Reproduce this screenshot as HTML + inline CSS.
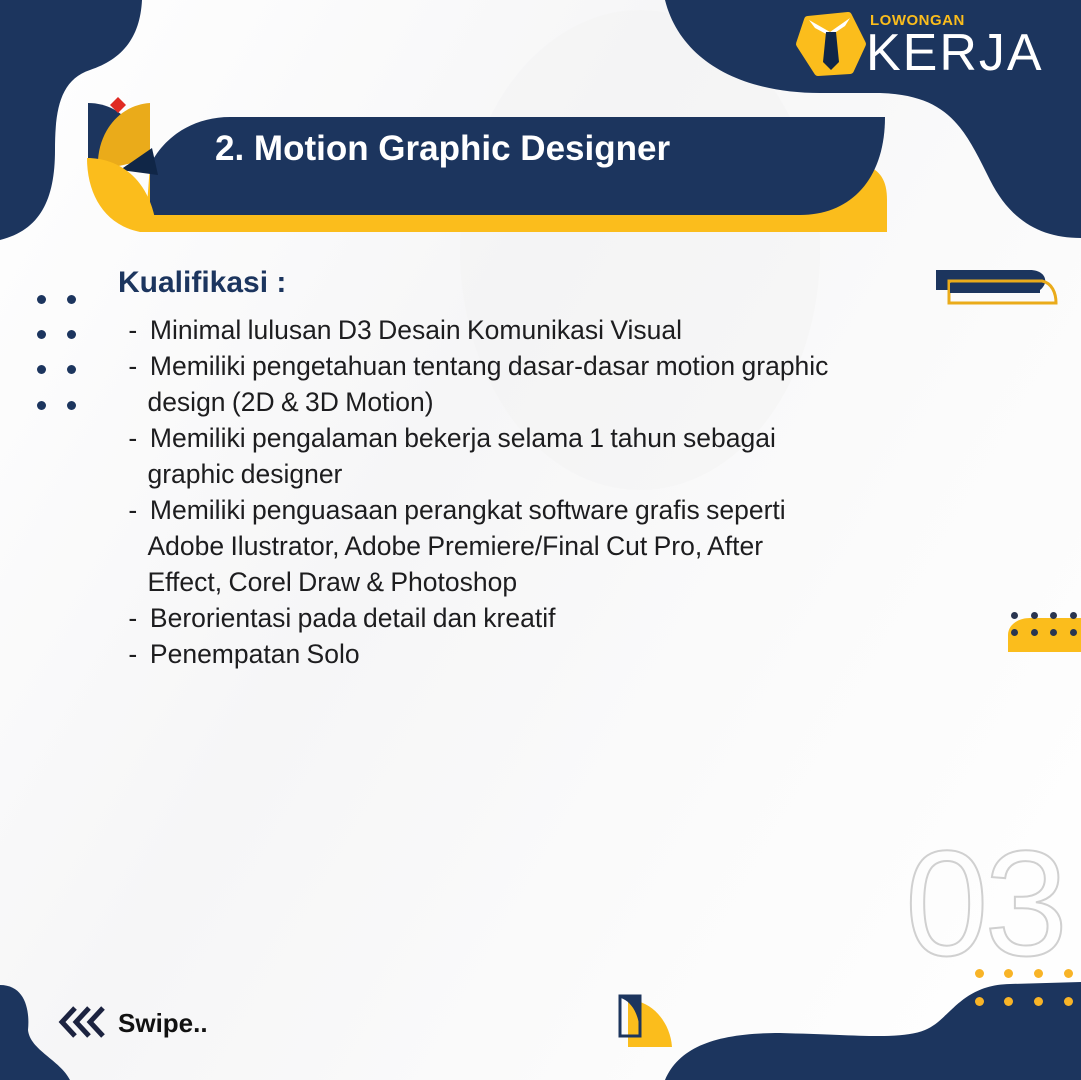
<!DOCTYPE html>
<html><head><meta charset="utf-8"><style>
body{margin:0}
#c{position:relative;width:1081px;height:1080px;overflow:hidden;background:linear-gradient(120deg,#fff 0%,#f6f6f7 40%,#fbfbfb 70%,#fff 100%);font-family:"Liberation Sans",sans-serif}
.abs{position:absolute}
.txt{position:absolute;left:122px;top:312px;font-size:26.5px;line-height:36px;color:#1d1d1f;letter-spacing:0px;word-spacing:-1px}
.txt div{white-space:nowrap}
.dot{position:absolute;width:9px;height:9px;border-radius:50%}
</style></head><body><div id="c">
<svg class="abs" style="left:0;top:0" width="1081" height="1080">
 <ellipse cx="640" cy="250" rx="180" ry="240" fill="#f3f3f4" opacity=".6"/>
 <path d="M0 0H142C140 40 120 60 90 70C60 80 55 110 55 150C55 200 40 230 0 240Z" fill="#1c355e"/>
 <path d="M665 0H1081V238C1040 238 1010 220 990 180C965 130 950 95 880 93L820 93C740 93 680 60 665 0Z" fill="#1c355e"/>
 <path d="M0 985C25 985 30 1010 28 1030C30 1050 60 1060 70 1080H0Z" fill="#1c355e"/>
 <path d="M665 1080C680 1045 720 1033 780 1033C860 1035 900 1040 925 1030C950 1020 960 985 1010 984L1081 982V1080Z" fill="#1c355e"/>
 <path d="M145 232H887V200C887 180 880 170 865 165L150 165Z" fill="#fbbd1c"/>
 <path d="M150 215V165C165 135 195 117 230 117H885C885 180 850 215 800 215Z" fill="#1c355e"/>
 <path d="M88 103C110 103 125 115 130 125L110 165L88 160Z" fill="#1c355e"/>
 <path d="M110 105L118 97L126 105L118 113Z" fill="#e02a23"/>
 <path d="M150 103V160C130 160 110 175 98 160C100 130 120 105 150 103Z" fill="#eaab1a"/>
 <path d="M120 170L152 148L158 175Z" fill="#102647"/>
 <path d="M87 158C120 158 152 180 157 232H140C105 225 87 195 87 158Z" fill="#fbbd1c"/>
 <path d="M936 270H1030C1045 270 1050 282 1040 290H936Z" fill="#1c355e"/>
 <path d="M949 281H1042C1052 283 1056 293 1056 303H949Z" fill="none" stroke="#eaab1a" stroke-width="3"/>
 <rect x="950" y="283" width="90" height="10" fill="#1c355e"/>
 <path d="M1008 652V635C1008 625 1018 618 1030 618H1081V652Z" fill="#fbbd1c"/>
 <path d="M808 20L848 16L862 44L850 70L818 72L800 44Z" fill="#fbbd1c" stroke="#fbbd1c" stroke-width="8" stroke-linejoin="round"/>
 <path d="M809 20L830 32L850 18L845 26L830 36L815 28Z" fill="#fff"/>
 <path d="M826 32H836L839 62L831 70L823 62Z" fill="#102647"/>
 <path d="M628 1000C650 1000 670 1020 672 1047H628Z" fill="#fbbd1c"/>
 <rect x="620" y="996" width="20" height="40" fill="none" stroke="#1c355e" stroke-width="3"/>
 <path d="M621 997H640V1036C640 1015 632 1002 621 998Z" fill="#1c355e"/>
 <g fill="none" stroke="#1c2340" stroke-width="5"><path d="M75 1008L62 1022L75 1036"/><path d="M89 1008L76 1022L89 1036"/><path d="M103 1008L90 1022L103 1036"/></g>
</svg>
<div class="abs" style="left:870px;top:12px;color:#fbbd1c;font-weight:bold;font-size:15px;letter-spacing:0.5px">LOWONGAN</div>
<div class="abs" style="left:866px;top:28px;color:#fff;font-size:52px;line-height:50px;letter-spacing:2px">KERJA</div>
<div class="abs" style="left:215px;top:129px;color:#fff;font-weight:bold;font-size:35px">2. Motion Graphic Designer</div>
<div class="abs" style="left:118px;top:266px;color:#1c355e;font-weight:bold;font-size:30px">Kualifikasi :</div>
<div class="txt">
<div>&nbsp;- &nbsp;Minimal lulusan D3 Desain Komunikasi Visual</div>
<div>&nbsp;- &nbsp;Memiliki pengetahuan tentang dasar-dasar motion graphic</div>
<div>&nbsp;&nbsp;&nbsp;&nbsp;design (2D &amp; 3D Motion)</div>
<div>&nbsp;- &nbsp;Memiliki pengalaman bekerja selama 1 tahun sebagai</div>
<div>&nbsp;&nbsp;&nbsp;&nbsp;graphic designer</div>
<div>&nbsp;- &nbsp;Memiliki penguasaan perangkat software grafis seperti</div>
<div>&nbsp;&nbsp;&nbsp;&nbsp;Adobe Ilustrator, Adobe Premiere/Final Cut Pro, After</div>
<div>&nbsp;&nbsp;&nbsp;&nbsp;Effect, Corel Draw &amp; Photoshop</div>
<div>&nbsp;- &nbsp;Berorientasi pada detail dan kreatif</div>
<div>&nbsp;- &nbsp;Penempatan Solo</div>
</div>
<div class="abs" style="left:118px;top:1008px;color:#111;font-weight:bold;font-size:26px">Swipe..</div>
<div class="abs" style="left:905px;top:828px;font-size:150px;line-height:150px;color:transparent;-webkit-text-stroke:2px #d0d0d0;letter-spacing:-4px">03</div>
<div class="dot" style="left:37px;top:295px;background:#1c355e"></div><div class="dot" style="left:67px;top:295px;background:#1c355e"></div>
<div class="dot" style="left:37px;top:330px;background:#1c355e"></div><div class="dot" style="left:67px;top:330px;background:#1c355e"></div>
<div class="dot" style="left:37px;top:365px;background:#1c355e"></div><div class="dot" style="left:67px;top:365px;background:#1c355e"></div>
<div class="dot" style="left:37px;top:401px;background:#1c355e"></div><div class="dot" style="left:67px;top:401px;background:#1c355e"></div>
<div class="dot" style="left:1011px;top:612px;width:7px;height:7px;background:#2a3550"></div><div class="dot" style="left:1031px;top:612px;width:7px;height:7px;background:#2a3550"></div><div class="dot" style="left:1050px;top:612px;width:7px;height:7px;background:#2a3550"></div><div class="dot" style="left:1070px;top:612px;width:7px;height:7px;background:#2a3550"></div>
<div class="dot" style="left:1011px;top:629px;width:7px;height:7px;background:#2a3550"></div><div class="dot" style="left:1031px;top:629px;width:7px;height:7px;background:#2a3550"></div><div class="dot" style="left:1050px;top:629px;width:7px;height:7px;background:#2a3550"></div><div class="dot" style="left:1070px;top:629px;width:7px;height:7px;background:#2a3550"></div>
<div class="dot" style="left:975px;top:969px;background:#f8b427"></div><div class="dot" style="left:1004px;top:969px;background:#f8b427"></div><div class="dot" style="left:1034px;top:969px;background:#f8b427"></div><div class="dot" style="left:1064px;top:969px;background:#f8b427"></div>
<div class="dot" style="left:975px;top:997px;background:#f8b427"></div><div class="dot" style="left:1004px;top:997px;background:#f8b427"></div><div class="dot" style="left:1034px;top:997px;background:#f8b427"></div><div class="dot" style="left:1064px;top:997px;background:#f8b427"></div>
</div></body></html>
